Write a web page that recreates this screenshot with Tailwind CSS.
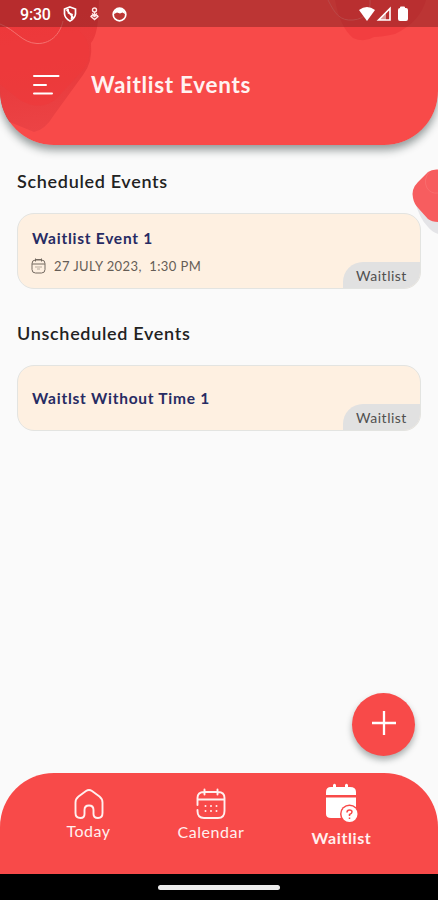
<!DOCTYPE html>
<html lang="en">
<head>
<meta charset="utf-8">
<title>Waitlist Events</title>
<script src="https://cdn.jsdelivr.net/npm/@tailwindcss/browser@4"></script>
</head>
<body class="bg-[#fafafa]">
<div class="relative flex h-[900px] w-[438px] flex-col overflow-hidden bg-[#fafafa] font-['Lato',sans-serif]">
  <header class="relative h-[145px] shrink-0 overflow-hidden rounded-b-[54px] bg-[#f84a49]">
    <svg class="absolute inset-0" width="438" height="145" viewBox="0 0 438 145" fill="none">
      <defs><linearGradient id="g" x1="30" y1="20" x2="50" y2="135" gradientUnits="userSpaceOnUse"><stop stop-color="#ed393b"/><stop offset=".55" stop-color="#e93c3e"/><stop offset="1" stop-color="#ec4446"/></linearGradient></defs>
      <path d="M0 0H99Q99 34 91 43Q93 62 83 75L54 115Q45 130 34 132L0 118Z" fill="url(#g)"/>
      <path d="M0 0H80V32Q88 39 89 50Q91 63 80 73L55 100Q39 111 20 100L0 84Z" fill="#ee383a" opacity=".6"/>
      <path d="M0 24C16 30 22 43 37 43.500C53 44 61 31 63 21" stroke="#f4716f" stroke-width="1"/>
      <path d="M335 0H426Q420 22 395 34Q382 37 374 37Q364 43 353 38Q340 27 335 0Z" fill="#f23e40"/>
      <path d="M328 0C335 14 340 21 353 20C366 19 371 10 370 0" stroke="#f4716f"/>
    </svg>
    <div class="relative flex h-[27px] items-center bg-[#802020]/50 text-white">
      <span class="ml-[20px] w-[32px] font-[Roboto,sans-serif] text-[16px] leading-none font-medium whitespace-nowrap pt-[2px] tracking-[-0.2px]">9:30</span>
      <svg class="ml-[11px] mt-[1px]" width="14" height="16" viewBox="0 0 14 16" fill="none" stroke="#fff" stroke-width="1.700"><path d="M7 1L12.500 3V8Q12 12.500 7 15Q2 12.500 1.500 8V3Z"/><path d="M3.500 3.500L10.500 12M5 3L5.500 7L9 8.500L8.500 13"/></svg>
      <svg class="ml-[12px] mt-[1px]" width="11" height="14" viewBox="0 0 11 14" fill="none" stroke="#ffe6e5" stroke-width="1.400"><circle cx="5.500" cy="3" r="2"/><path d="M5.500 5V9M3 6.500L5.500 9L8 6.500M5.500 12.500L2 9.500Q3 7.500 5.500 9.500Q8 7.500 9 9.500Z"/></svg>
      <svg class="ml-[11.500px] mt-[1px]" width="15" height="15" viewBox="0 0 15 15"><circle cx="7.500" cy="7.500" r="6.300" fill="none" stroke="#fff" stroke-width="1.700"/><path d="M2 7Q2 2 7.500 1.500Q13 2 13 7L10.500 5.500L8 6.500L5 5.500Z" fill="#fff"/></svg>
      <svg class="ml-[232px] mt-[1px]" width="51" height="16" viewBox="0 0 51 16"><path d="M0 4Q8 -2 16 4L8 15Z" fill="#fff"/><path d="M19.500 14L31 2.500V14Z" fill="none" stroke="#fff" stroke-width="1.600"/><path d="M27 6V14H20Z" fill="#fff" opacity=".5"/><path d="M41 1.500Q41 .5 42 .5H45Q46 .5 46 1.500V2H47Q49 2 49 4V13Q49 15 47 15H41Q39 15 39 13V4Q39 2 41 2Z" fill="#fff"/></svg>
    </div>
    <div class="relative flex h-[116px] items-center">
      <svg class="-mt-[1px] ml-[32px]" width="28" height="22" viewBox="0 0 28 22" fill="none" stroke="#fff" stroke-width="2" stroke-linecap="round"><path d="M2 2H26.500M2 11H14M2 19.500H20"/></svg>
      <h1 class="ml-[31px] text-[22.500px] leading-[26px] font-bold tracking-[0.700px] whitespace-nowrap text-[#fff2f1]">Waitlist Events</h1>
    </div>
  </header>
  <div class="absolute top-[45px] left-0 h-[100px] w-[438px] rounded-b-[54px] shadow-[0_5px_9px_rgba(20,35,35,0.45)] [clip-path:inset(0_0_-30px_0)]"></div>

  <svg class="absolute top-[165px] right-0" width="28" height="75" viewBox="0 0 28 75"><path d="M5 36Q9 53 18 62Q22 67 28 69V40Z" fill="#e4e4e7"/><path d="M28 4.500Q22 4 18 7L8 17Q1 24 3 33Q4 39 9 44L18 54Q22 57 28 57Z" fill="#f75d5f"/><path d="M19 7Q13 15 17 23Q21 29 28 28" fill="none" stroke="#f96c6d"/></svg>

  <main class="relative flex flex-1 flex-col px-[17px] pt-[24px]">
    <h2 class="h-[24px] text-[18px] leading-[24px] font-semibold tracking-[0.680px] whitespace-nowrap text-[#222]">Scheduled Events</h2>
    <article class="relative mt-[20px] h-[76px] overflow-hidden rounded-[17px] border border-[#e3e4e1] bg-[#fef0e1] pl-[14px]">
      <h3 class="mt-[14px] text-[15.500px] leading-[20px] font-bold tracking-[0.75px] whitespace-nowrap text-[#272b63]">Waitlist Event 1</h3>
      <div class="mt-[8px] flex h-[19px] items-center">
        <svg class="-ml-[1px]" width="15" height="16" viewBox="0 0 15 16" fill="none" stroke="#746a60"><rect x="1" y="2" width="13" height="13" rx="3.500"/><path d="M1 6H14M4.500 .5V3.500M10.500 .5V3.500M4 1.500H11"/><path d="M4 9H11M6 11H9" stroke-opacity=".5"/></svg>
        <span class="ml-[8px] text-[13px] leading-[18px] tracking-[0.4px] whitespace-nowrap text-[#655d56]">27 JULY 2023,&nbsp; 1:30 PM</span>
      </div>
      <span class="absolute right-0 bottom-0 flex h-[26px] w-[77px] items-center justify-center rounded-tl-[20px] bg-[#e1e1e1] text-[14px] tracking-[0.5px] text-[#505050]">Waitlist</span>
    </article>
    <h2 class="mt-[32px] h-[24px] text-[18px] leading-[24px] font-semibold tracking-[0.680px] whitespace-nowrap text-[#222]">Unscheduled Events</h2>
    <article class="relative mt-[20px] flex h-[66px] items-center overflow-hidden rounded-[17px] border border-[#e3e4e1] bg-[#fef0e1] pl-[14px]">
      <h3 class="text-[15.500px] leading-[20px] font-bold tracking-[0.75px] whitespace-nowrap text-[#272b63]">Waitlst Without Time 1</h3>
      <span class="absolute right-0 bottom-0 flex h-[26px] w-[77px] items-center justify-center rounded-tl-[20px] bg-[#e1e1e1] text-[14px] tracking-[0.5px] text-[#505050]">Waitlist</span>
    </article>
  </main>

  <button aria-label="Add event" class="absolute top-[693px] left-[352px] flex size-[63px] items-center justify-center rounded-full bg-[#f84a49] pb-[3px] shadow-[0_4px_6px_rgba(20,35,35,0.35)]">
    <svg width="26" height="26" viewBox="0 0 26 26" stroke="#fff" stroke-width="2.300"><path d="M13 1V25M1 13H25"/></svg>
  </button>

  <nav class="flex h-[101px] shrink-0 rounded-t-[54px] bg-[#f84a49] text-[#fff0ef]">
    <div class="ml-[48px] flex w-[81px] flex-col items-center pt-[15px]">
      <svg width="32" height="32" viewBox="0 0 32 32" fill="none" stroke="currentColor" stroke-width="1.900" stroke-linejoin="round"><path d="M13 3Q16 1 19 3L26.500 8.500Q29.500 11 29.500 14.500V25Q29.500 30 25 30Q20.500 30 20.500 26V22Q20.500 17.500 16 17.500Q11.500 17.500 11.500 22V26Q11.500 30 7.500 30Q2.500 30 2.500 25V14.500Q2.500 11 5.500 8.500Z"/></svg>
      <span class="mt-[1px] text-[16px] leading-[20px] tracking-[0.500px]">Today</span>
    </div>
    <div class="ml-[31px] flex w-[102px] flex-col items-center pt-[15px]">
      <svg width="32" height="32" viewBox="0 0 32 32" fill="none" stroke="currentColor" stroke-width="1.900" stroke-linecap="round"><path d="M2.500 17V10Q2.500 4 9 4H23Q29.500 4 29.500 10V23Q29.500 30 23 30H9Q2.500 30 2.500 23V22M3 11.500H29M9.500 1.500V6.500M22.500 1.500V6.500"/><g stroke-width="2" stroke-dasharray="0 5.500"><path d="M10.500 18H23M10.500 23H23"/></g></svg>
      <span class="mt-[2px] text-[16px] leading-[20px] tracking-[0.550px]">Calendar</span>
    </div>
    <div class="ml-[29px] flex w-[101px] flex-col items-center pt-[10px]">
      <svg class="-ml-[2px]" width="36" height="41" viewBox="0 0 36 41"><path d="M3 12V9Q3 4 8 4H10V2Q11.500 -.5 13 2V4H22V2Q23.500 -.5 25 2V4H27Q33 4 33 9V12Z" fill="#fff"/><path d="M3 14.500H33V31Q33 35 28 35H8Q3 35 3 31Z" fill="#fff"/><circle cx="26.500" cy="31" r="9.500" fill="#f84a49"/><circle cx="26.500" cy="31" r="8" fill="#fff"/><path d="M24 29.500Q24 27 26.500 27Q29 27 29 29Q29 30.500 26.500 31.500V33M26.500 34.500V36" fill="none" stroke="#f84a49" stroke-width="1.500"/></svg>
      <span class="mt-[4px] text-[16px] leading-[20px] font-bold tracking-[0.6px]">Waitlist</span>
    </div>
  </nav>
  <footer class="flex h-[26px] shrink-0 items-center justify-center bg-black"><div class="h-[5px] w-[122px] rounded-full bg-[#ececec]"></div></footer>
</div>
</body>
</html>
